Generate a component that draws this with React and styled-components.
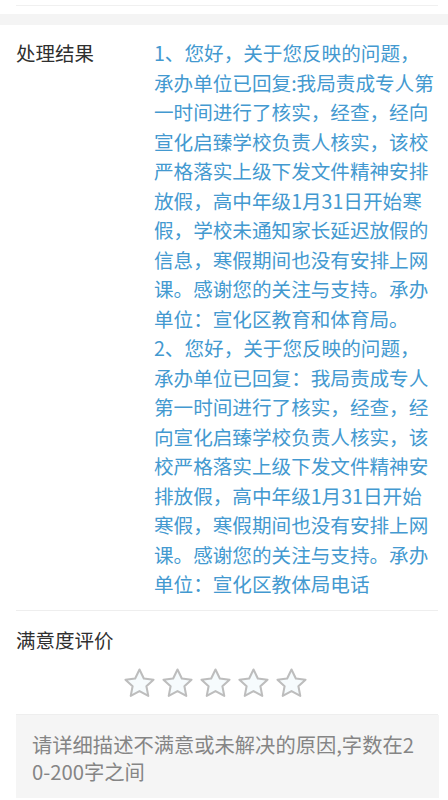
import styled, { createGlobalStyle } from "styled-components";

const GlobalStyle = createGlobalStyle`
  body {
    margin: 0;
    background: #fff;
    font-family: "Noto Sans CJK SC", "Noto Sans", sans-serif;
  }
`;

const Page = styled.div`
  width: 448px;
  height: 800px;
  overflow: hidden;
  background: #fff;
`;

const TopBar = styled.div`
  height: 14px;
`;

const TopLine = styled.div`
  height: 5px;
  margin: 0 10px 0 16px;
  border-bottom: 1px solid #f0f0f0;
`;

const Spacer = styled.div`
  height: 11px;
  background: #f4f4f4;
`;

const ResultRow = styled.div`
  display: grid;
  grid-template-columns: 138px 282px;
  padding: 13px 0 11px 16px;
`;

const Label = styled.div`
  font-size: 19.5px;
  line-height: 29.5px;
  color: #2f2f2f;
`;

const Reply = styled.div`
  font-size: 19.6px;
  line-height: 29.5px;
  color: #4399d0;
`;

const Para = styled.p`
  margin: 0;
`;

const Divider = styled.div`
  height: 1px;
  margin: 0 10px 0 16px;
  background: #eee;
`;

const Rating = styled.div`
  padding: 14px 0 14px 16px;
`;

const Stars = styled.div`
  display: flex;
  justify-content: center;
  gap: 5px;
  margin-top: 13px;
  padding-right: 34px;
`;

const StarIcon = styled.svg`
  width: 33px;
  height: 33px;
  display: block;
`;

const Feedback = styled.textarea`
  display: block;
  box-sizing: border-box;
  width: 423px;
  height: 83px;
  margin-left: 16px;
  padding: 16px 16px;
  border: none;
  outline: none;
  resize: none;
  background: #f5f5f5;
  font-family: inherit;
  font-size: 20.3px;
  line-height: 27px;
  color: #333;
  word-break: break-all;

  &::placeholder {
    color: #858585;
  }
`;

const Star = () => (
  <StarIcon viewBox="0 0 32 32">
    <path
      d="M16 2.4 L20.2 11.1 L29.6 12.3 L22.7 18.7 L24.5 28 L16 23.4 L7.5 28 L9.3 18.7 L2.4 12.3 L11.8 11.1 Z"
      fill="#f6fbfd"
      stroke="#bdbdbd"
      strokeWidth="2"
      strokeLinejoin="round"
    />
  </StarIcon>
);

const App = () => (
  <Page>
    <GlobalStyle />
    <TopBar>
      <TopLine />
    </TopBar>
    <Spacer />
    <ResultRow>
      <Label>处理结果</Label>
      <Reply>
        <Para>
          1、您好，关于您反映的问题，承办单位已回复:我局责成专人第一时间进行了核实，经查，经向宣化启臻学校负责人核实，该校严格落实上级下发文件精神安排放假，高中年级1月31日开始寒假，学校未通知家长延迟放假的信息，寒假期间也没有安排上网课。感谢您的关注与支持。承办单位：宣化区教育和体育局。
        </Para>
        <Para>
          2、您好，关于您反映的问题，承办单位已回复：我局责成专人第一时间进行了核实，经查，经向宣化启臻学校负责人核实，该校严格落实上级下发文件精神安排放假，高中年级1月31日开始寒假，寒假期间也没有安排上网课。感谢您的关注与支持。承办单位：宣化区教体局电话
        </Para>
      </Reply>
    </ResultRow>
    <Divider />
    <Rating>
      <Label>满意度评价</Label>
      <Stars>
        {[0, 1, 2, 3, 4].map((i) => (
          <Star key={i} />
        ))}
      </Stars>
    </Rating>
    <Divider />
    <Feedback placeholder="请详细描述不满意或未解决的原因,字数在20-200字之间" />
  </Page>
);

export default App;
